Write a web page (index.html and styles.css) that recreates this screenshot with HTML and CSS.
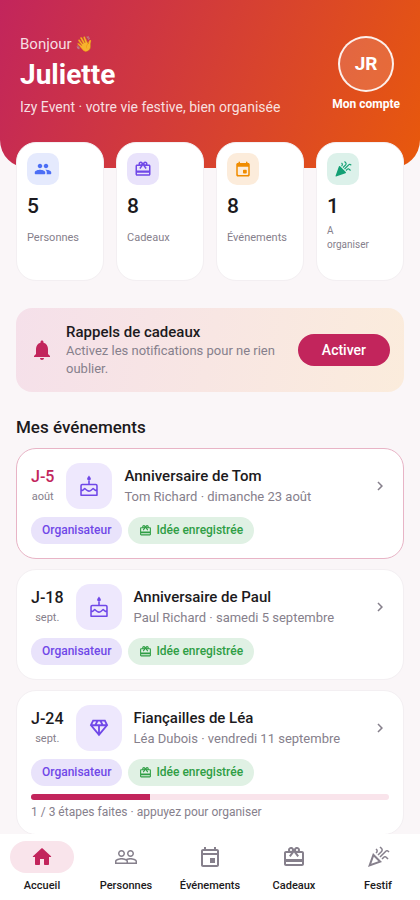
FILE: index.html
```html
<!DOCTYPE html>
<html lang="fr">
<head>
<meta charset="utf-8">
<meta name="viewport" content="width=device-width, initial-scale=1">
<title>Izy Event</title>
<link rel="stylesheet" href="styles.css">
</head>
<body>
<svg class="sprite" aria-hidden="true">
  <symbol id="people" viewBox="0 0 24 24"><path d="M16 11c1.66 0 2.99-1.34 2.99-3S17.66 5 16 5c-1.66 0-3 1.34-3 3s1.34 3 3 3zm-8 0c1.66 0 2.99-1.34 2.99-3S9.66 5 8 5C6.34 5 5 6.34 5 8s1.34 3 3 3zm0 2c-2.33 0-7 1.17-7 3.5V18c0 .55.45 1 1 1h12c.55 0 1-.45 1-1v-1.500c0-2.330-4.670-3.500-7-3.500zm8 0c-.29 0-.62.02-.97.05 1.16.84 1.970 1.970 1.970 3.450V18c0 .35-.07.69-.18 1H22c.55 0 1-.45 1-1v-1.500c0-2.330-4.670-3.500-7-3.500z"/></symbol>
  <symbol id="people-outline" viewBox="0 0 24 24"><path d="M16.5 13c-1.2 0-3.07.34-4.5 1-1.43-.67-3.3-1-4.5-1C5.33 13 1 14.08 1 16.25V19h22v-2.75c0-2.17-4.33-3.25-6.5-3.25zm-4 4.5h-10v-1.25c0-.54 2.56-1.75 5-1.75s5 1.21 5 1.75v1.25zm9 0H14v-1.25c0-.46-.2-.86-.52-1.22.88-.3 1.96-.53 3.02-.53 2.44 0 5 1.21 5 1.75v1.25zM7.500 12c1.930 0 3.500-1.570 3.500-3.500S9.430 5 7.500 5 4 6.570 4 8.500 5.570 12 7.500 12zm0-5.500c1.100 0 2 .9 2 2s-.9 2-2 2-2-.9-2-2 .9-2 2-2zm9 5.500c1.930 0 3.500-1.570 3.500-3.500S18.430 5 16.500 5 13 6.570 13 8.500s1.570 3.500 3.500 3.500zm0-5.500c1.100 0 2 .9 2 2s-.9 2-2 2-2-.9-2-2 .9-2 2-2z"/></symbol>
  <symbol id="gift" viewBox="0 0 24 24"><path d="M20 6h-2.180c.11-.31.18-.65.18-1 0-1.660-1.340-3-3-3-1.050 0-1.960.54-2.500 1.350l-.5.67-.5-.68C10.960 2.540 10.050 2 9 2 7.340 2 6 3.340 6 5c0 .35.07.69.18 1H4c-1.110 0-1.990.89-1.990 2L2 19c0 1.110.89 2 2 2h16c1.110 0 2-.89 2-2V8c0-1.110-.89-2-2-2zm-5-2c.55 0 1 .45 1 1s-.45 1-1 1-1-.45-1-1 .45-1 1-1zM9 4c.55 0 1 .45 1 1s-.45 1-1 1-1-.45-1-1 .45-1 1-1zm11 15H4v-2h16v2zm0-5H4V8h5.080L7 10.830 8.620 12 12 7.400l3.380 4.600L17 10.830 14.920 8H20v6z"/></symbol>
  <symbol id="event" viewBox="0 0 24 24"><path d="M16 13h-3c-.55 0-1 .45-1 1v3c0 .55.45 1 1 1h3c.55 0 1-.45 1-1v-3c0-.55-.45-1-1-1zm0-10v1H8V3c0-.55-.45-1-1-1s-1 .45-1 1v1H5c-1.110 0-1.990.9-1.990 2L3 20c0 1.100.89 2 2 2h14c1.100 0 2-.9 2-2V6c0-1.100-.9-2-2-2h-1V3c0-.55-.45-1-1-1s-1 .45-1 1zm2 17H6c-.55 0-1-.45-1-1V9h14v10c0 .55-.45 1-1 1z"/></symbol>
  <symbol id="event-outline" viewBox="0 0 24 24"><path d="M19 4h-1V2h-2v2H8V2H6v2H5c-1.110 0-1.990.9-1.990 2L3 20c0 1.100.89 2 2 2h14c1.100 0 2-.9 2-2V6c0-1.100-.9-2-2-2zm0 16H5V10h14v10zm0-12H5V6h14v2zm-7 5h5v5h-5z"/></symbol>
  <symbol id="streamers" viewBox="0 0 24 24"><path d="M14.530 12.530l5.590-5.590c.49-.49 1.280-.49 1.770 0l.59.59 1.060-1.060-.59-.59c-1.070-1.070-2.820-1.070-3.890 0l-5.590 5.590 1.060 1.060zM10.060 6.880l-.59.59 1.060 1.060.59-.59c1.070-1.070 1.070-2.820 0-3.890l-.59-.59-1.060 1.070.59.59c.49.48.49 1.280 0 1.760zM17.060 11.880l-1.590 1.590 1.060 1.060 1.590-1.590c.49-.49 1.280-.49 1.770 0l1.610 1.610 1.060-1.060-1.610-1.610c-1.080-1.070-2.820-1.070-3.890 0zM15.060 5.880l-3.590 3.590 1.060 1.060 3.590-3.590c1.070-1.070 1.070-2.820 0-3.890l-1.590-1.590-1.060 1.060 1.590 1.590c.49.49.49 1.290 0 1.770z"/></symbol>
  <symbol id="party" viewBox="0 0 24 24"><path d="M2.700 22l12.600-4.500c.7-.25.900-1.100.4-1.600L8.100 8.300c-.5-.5-1.400-.3-1.600.4L2 21.300c-.14.400.280.820.700.700z"/><use href="#streamers"/></symbol>
  <symbol id="party-outline" viewBox="0 0 24 24"><path d="M2 22l14-5-9-9-5 14zm10.350-5.820L5.300 18.700l2.520-7.050 4.530 4.530z"/><use href="#streamers"/></symbol>
  <symbol id="home" viewBox="0 0 24 24"><path d="M10 19v-5h4v5c0 .55.45 1 1 1h3c.55 0 1-.45 1-1v-7h1.700c.46 0 .68-.57.33-.87L12.670 3.600c-.38-.34-.96-.34-1.340 0l-8.360 7.530c-.34.3-.13.87.33.87H5v7c0 .55.45 1 1 1h3c.55 0 1-.45 1-1z"/></symbol>
  <symbol id="bell" viewBox="0 0 24 24"><path d="M12 22c1.100 0 2-.9 2-2h-4c0 1.100.89 2 2 2zm6-6v-5c0-3.070-1.640-5.640-4.500-6.320V4c0-.83-.67-1.500-1.500-1.500s-1.500.67-1.500 1.500v.68C7.630 5.360 6 7.920 6 11v5l-2 2v1h16v-1l-2-2z"/></symbol>
  <symbol id="chevron" viewBox="0 0 24 24"><path d="M10 6L8.590 7.410 13.170 12l-4.580 4.590L10 18l6-6z"/></symbol>
  <symbol id="cake" viewBox="0 0 24 24"><path d="M12 6c1.100 0 2-.8 2-1.900 0-.4-.1-.7-.3-1L12 .6l-1.700 2.500c-.2.300-.3.600-.3 1C10 5.200 10.900 6 12 6z"/><path d="M12 6v4M4.600 10.300h14.800c.8 0 1.300.5 1.300 1.300v10.500H3.300V11.600c0-.8.500-1.300 1.300-1.300zM3.300 17.200c1 0 1.700-.3 2.400-.9l1.700-1.600 1.900 1.700c1.500 1.300 3.800 1.300 5.300 0l1.900-1.700 1.800 1.600c.7.600 1.400.9 2.400.9" fill="none" stroke="currentColor" stroke-width="1.700" stroke-linejoin="round"/></symbol>
  <symbol id="diamond" viewBox="0 0 24 24"><path d="M19 3H5L2 9l10 12L22 9l-3-6zM9.620 8l1.500-3h1.760l1.500 3H9.620zM11 10v6.680L5.440 10H11zm2 0h5.560L13 16.680V10zm6.260-2h-2.650l-1.500-3h2.650l1.500 3zM6.240 5h2.650l-1.500 3H4.740l1.500-3z"/></symbol>
</svg>

<div class="app">
  <main class="content">
    <header class="hero">
      <div class="hero-text">
        <p class="hello">Bonjour 👋</p>
        <h1>Juliette</h1>
        <p class="tagline">Izy Event · votre vie festive, bien organisée</p>
      </div>
      <a class="account" href="#compte">
        <span class="avatar">JR</span>
        <span>Mon compte</span>
      </a>
    </header>

    <section class="stats">
      <a class="stat" href="#personnes">
        <span class="stat-icon blue"><svg><use href="#people"/></svg></span>
        <strong>5</strong>
        <span class="stat-label">Personnes</span>
      </a>
      <a class="stat" href="#cadeaux">
        <span class="stat-icon purple"><svg><use href="#gift"/></svg></span>
        <strong>8</strong>
        <span class="stat-label">Cadeaux</span>
      </a>
      <a class="stat" href="#evenements">
        <span class="stat-icon orange"><svg><use href="#event"/></svg></span>
        <strong>8</strong>
        <span class="stat-label">Événements</span>
      </a>
      <a class="stat" href="#festif">
        <span class="stat-icon green"><svg><use href="#party"/></svg></span>
        <strong>1</strong>
        <span class="stat-label small">A<br>organiser</span>
      </a>
    </section>

    <section class="reminder">
      <svg class="bell"><use href="#bell"/></svg>
      <div class="reminder-text">
        <h2>Rappels de cadeaux</h2>
        <p>Activez les notifications pour ne rien oublier.</p>
      </div>
      <button type="button">Activer</button>
    </section>

    <section class="events">
      <h2>Mes événements</h2>

      <a class="event soon" href="#tom">
        <div class="event-row">
          <div class="countdown"><strong>J-5</strong><span>août</span></div>
          <span class="event-icon"><svg><use href="#cake"/></svg></span>
          <div class="event-text"><h3>Anniversaire de Tom</h3><p>Tom Richard · dimanche 23 août</p></div>
          <svg class="chevron"><use href="#chevron"/></svg>
        </div>
        <div class="chips">
          <span class="chip role">Organisateur</span>
          <span class="chip idea"><svg><use href="#gift"/></svg>Idée enregistrée</span>
        </div>
      </a>

      <a class="event" href="#paul">
        <div class="event-row">
          <div class="countdown"><strong>J-18</strong><span>sept.</span></div>
          <span class="event-icon"><svg><use href="#cake"/></svg></span>
          <div class="event-text"><h3>Anniversaire de Paul</h3><p>Paul Richard · samedi 5 septembre</p></div>
          <svg class="chevron"><use href="#chevron"/></svg>
        </div>
        <div class="chips">
          <span class="chip role">Organisateur</span>
          <span class="chip idea"><svg><use href="#gift"/></svg>Idée enregistrée</span>
        </div>
      </a>

      <a class="event" href="#lea">
        <div class="event-row">
          <div class="countdown"><strong>J-24</strong><span>sept.</span></div>
          <span class="event-icon"><svg><use href="#diamond"/></svg></span>
          <div class="event-text"><h3>Fiançailles de Léa</h3><p>Léa Dubois · vendredi 11 septembre</p></div>
          <svg class="chevron"><use href="#chevron"/></svg>
        </div>
        <div class="chips">
          <span class="chip role">Organisateur</span>
          <span class="chip idea"><svg><use href="#gift"/></svg>Idée enregistrée</span>
        </div>
        <div class="progress"><div class="progress-bar" style="width: 33.33%"></div></div>
        <p class="steps">1 / 3 étapes faites · appuyez pour organiser</p>
      </a>
    </section>
  </main>

  <nav class="tabs">
    <a class="tab active" href="#accueil"><span class="tab-icon"><svg><use href="#home"/></svg></span>Accueil</a>
    <a class="tab" href="#personnes"><span class="tab-icon"><svg><use href="#people-outline"/></svg></span>Personnes</a>
    <a class="tab" href="#evenements"><span class="tab-icon"><svg><use href="#event-outline"/></svg></span>Événements</a>
    <a class="tab" href="#cadeaux"><span class="tab-icon"><svg><use href="#gift"/></svg></span>Cadeaux</a>
    <a class="tab" href="#festif"><span class="tab-icon"><svg><use href="#party-outline"/></svg></span>Festif</a>
  </nav>
</div>
</body>
</html>
```
FILE: styles.css
```css
* { box-sizing: border-box; margin: 0; padding: 0; }

body {
  font-family: Roboto, "Noto Color Emoji", sans-serif;
  font-size: 13px;
  line-height: 18px;
  color: #1c1a20;
  background: #faf6f8;
}

a { color: inherit; text-decoration: none; }
svg { display: block; flex: none; fill: currentColor; }
.sprite { display: none; }

.app { height: 100vh; display: flex; flex-direction: column; }
.content { flex: 1; min-height: 0; overflow-y: auto; scrollbar-width: none; }

/* Header */
.hero {
  display: flex;
  justify-content: space-between;
  align-items: flex-start;
  padding: 34px 20px 50px;
  border-radius: 0 0 28px 28px;
  background: linear-gradient(112deg, #c2255c, #e8590c);
  color: #fff;
}
.hello { font-size: 15px; line-height: 20px; color: rgb(255 255 255 / 85%); }
.hero h1 { font-size: 28px; line-height: 42px; font-weight: 700; }
.tagline { font-size: 14px; line-height: 22px; color: rgb(255 255 255 / 85%); }
.account {
  display: flex;
  flex-direction: column;
  align-items: center;
  gap: 4px;
  margin-top: 2px;
  font-size: 12px;
  line-height: 16px;
  font-weight: 700;
}
.avatar {
  display: grid;
  place-items: center;
  width: 56px;
  height: 56px;
  border: 2px solid rgb(255 255 255 / 90%);
  border-radius: 50%;
  background: rgb(255 255 255 / 15%);
  font-size: 19px;
}

/* Counters */
.stats {
  display: grid;
  grid-template-columns: repeat(4, 1fr);
  gap: 12px;
  margin: -26px 16px 0;
}
.stat {
  display: flex;
  flex-direction: column;
  min-height: 139px;
  padding: 10px;
  border: 1px solid #f3eff2;
  border-radius: 20px;
  background: #fff;
}
.stat-icon {
  display: grid;
  place-items: center;
  width: 32px;
  height: 32px;
  border-radius: 10px;
}
.stat-icon svg { width: 18px; height: 18px; }
.blue { color: #4c6ef5; background: #e5eafd; }
.purple { color: #7048e8; background: #e9e3fb; }
.orange { color: #f08c00; background: #fcecdb; }
.green { color: #12a074; background: #dcf1ea; }
.stat strong { margin-top: 7px; font-size: 21px; line-height: 28px; font-weight: 500; }
.stat-label { margin-top: 8px; font-size: 11px; line-height: 20px; color: #86808c; }
.stat-label.small { margin-top: 4px; font-size: 10px; line-height: 14px; }

/* Reminder */
.reminder {
  display: flex;
  align-items: center;
  gap: 12px;
  margin: 27px 16px 0;
  padding: 14px;
  border-radius: 16px;
  background: linear-gradient(102deg, #f5e0ea, #fbecdc);
}
.bell { width: 24px; height: 24px; color: #c2255c; }
.reminder-text { flex: 1; }
.reminder h2 { font-size: 15px; line-height: 20px; font-weight: 500; }
.reminder p { color: #86808c; }
.reminder button {
  height: 32px;
  padding: 0 24px;
  border: 0;
  border-radius: 16px;
  background: #c2255c;
  color: #fff;
  font: 500 14px/20px Roboto, sans-serif;
}

/* Events */
.events {
  display: flex;
  flex-direction: column;
  gap: 10px;
  padding: 24px 16px 12px;
}
.events h2 { font-size: 17px; line-height: 22px; font-weight: 500; }
.event {
  padding: 14px;
  border: 1px solid #f3eff2;
  border-radius: 20px;
  background: #fff;
}
.event.soon { border-color: #e8b4c6; }
.event-row { display: flex; align-items: center; gap: 12px; }
.countdown { display: flex; flex-direction: column; align-items: center; }
.countdown strong { font-size: 16px; line-height: 22px; font-weight: 500; }
.countdown span { font-size: 11px; line-height: 18px; color: #86808c; }
.soon .countdown strong { color: #c2255c; }
.event-icon {
  display: grid;
  place-items: center;
  width: 46px;
  height: 46px;
  border-radius: 14px;
  background: #eee8fd;
  color: #7048e8;
}
.event-icon svg { width: 22px; height: 22px; }
.event-text { flex: 1; }
.event-text h3 { font-size: 15px; line-height: 22px; font-weight: 500; }
.event-text p { line-height: 20px; color: #86808c; }
.chevron { width: 18px; height: 18px; color: #86808c; }
.chips { display: flex; gap: 6px; margin-top: 8px; }
.chip {
  display: flex;
  align-items: center;
  gap: 4px;
  padding: 4px 11px;
  border-radius: 14px;
  font-size: 12px;
  line-height: 19px;
  font-weight: 500;
}
.chip svg { width: 13px; height: 13px; }
.role { background: #e9e3fb; color: #7048e8; }
.idea { background: #e0f1e4; color: #2f9e44; }
.progress {
  height: 6px;
  margin-top: 8px;
  border-radius: 3px;
  background: #f9e4eb;
  overflow: hidden;
}
.progress-bar { height: 100%; background: #c2255c; }
.steps { margin-top: 4px; font-size: 12px; line-height: 16px; color: #86808c; }

/* Bottom navigation */
.tabs {
  display: grid;
  grid-template-columns: repeat(5, 1fr);
  padding: 7px 0 6px;
  background: #fff;
}
.tab {
  display: flex;
  flex-direction: column;
  align-items: center;
  gap: 5px;
  font-size: 11px;
  line-height: 16px;
  font-weight: 500;
}
.tab-icon {
  display: grid;
  place-items: center;
  width: 64px;
  height: 32px;
  border-radius: 16px;
  color: #86808c;
}
.tab-icon svg { width: 24px; height: 24px; }
.active .tab-icon { background: #f9e4eb; color: #c2255c; }
```
